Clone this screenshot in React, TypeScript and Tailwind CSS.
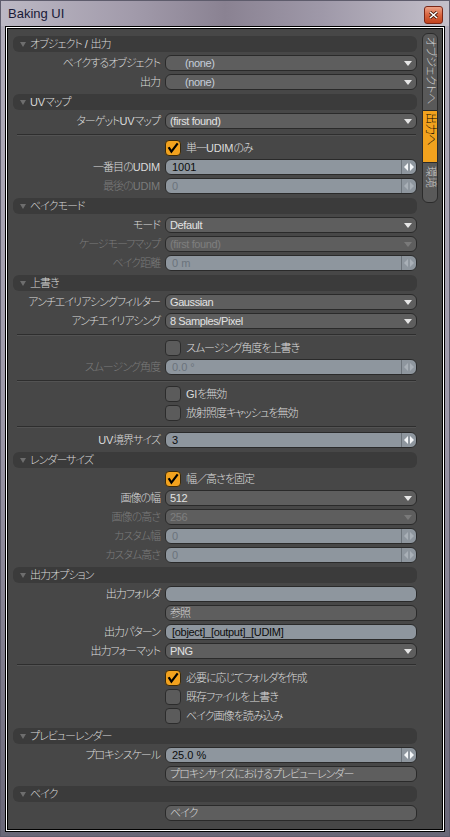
import React from "react";

type Item =
  | { kind: "header"; text: string }
  | { kind: "select"; label: string; value: string; disabled?: boolean; indent?: boolean }
  | { kind: "number"; label: string; value: string; disabled?: boolean }
  | { kind: "field"; label: string; value: string }
  | { kind: "button"; text: string }
  | { kind: "check"; text: string; checked?: boolean }
  | { kind: "sep" };

const items: Item[] = [
  { kind: "header", text: "オブジェクト / 出力" },
  { kind: "select", label: "ベイクするオブジェクト", value: "(none)", indent: true },
  { kind: "select", label: "出力", value: "(none)", indent: true },
  { kind: "header", text: "UVマップ" },
  { kind: "select", label: "ターゲットUVマップ", value: "(first found)" },
  { kind: "sep" },
  { kind: "check", text: "単一UDIMのみ", checked: true },
  { kind: "number", label: "一番目のUDIM", value: "1001" },
  { kind: "number", label: "最後のUDIM", value: "0", disabled: true },
  { kind: "header", text: "ベイクモード" },
  { kind: "select", label: "モード", value: "Default" },
  { kind: "select", label: "ケージモーフマップ", value: "(first found)", disabled: true },
  { kind: "number", label: "ベイク距離", value: "0 m", disabled: true },
  { kind: "header", text: "上書き" },
  { kind: "select", label: "アンチエイリアシングフィルター", value: "Gaussian" },
  { kind: "select", label: "アンチエイリアシング", value: "8 Samples/Pixel" },
  { kind: "sep" },
  { kind: "check", text: "スムージング角度を上書き" },
  { kind: "number", label: "スムージング角度", value: "0.0 °", disabled: true },
  { kind: "sep" },
  { kind: "check", text: "GIを無効" },
  { kind: "check", text: "放射照度キャッシュを無効" },
  { kind: "sep" },
  { kind: "number", label: "UV境界サイズ", value: "3" },
  { kind: "header", text: "レンダーサイズ" },
  { kind: "check", text: "幅／高さを固定", checked: true },
  { kind: "select", label: "画像の幅", value: "512" },
  { kind: "select", label: "画像の高さ", value: "256", disabled: true },
  { kind: "number", label: "カスタム幅", value: "0", disabled: true },
  { kind: "number", label: "カスタム高さ", value: "0", disabled: true },
  { kind: "header", text: "出力オプション" },
  { kind: "field", label: "出力フォルダ", value: "" },
  { kind: "button", text: "参照" },
  { kind: "field", label: "出力パターン", value: "[object]_[output]_[UDIM]" },
  { kind: "select", label: "出力フォーマット", value: "PNG" },
  { kind: "sep" },
  { kind: "check", text: "必要に応じてフォルダを作成", checked: true },
  { kind: "check", text: "既存ファイルを上書き" },
  { kind: "check", text: "ベイク画像を読み込み" },
  { kind: "header", text: "プレビューレンダー" },
  { kind: "number", label: "プロキシスケール", value: "25.0 %" },
  { kind: "button", text: "プロキシサイズにおけるプレビューレンダー" },
  { kind: "header", text: "ベイク" },
  { kind: "button", text: "ベイク" },
];

// japanese runs are set tight, latin runs inside them keep near-normal spacing
function JP({ text }: { text: string }) {
  const parts = text.split(/([A-Za-z0-9 /]+)/).filter((p) => p !== "");
  return (
    <>
      {parts.map((p, i) =>
        /^[A-Za-z0-9 /]+$/.test(p) ? (
          <span key={i} className="whitespace-pre tracking-[-0.2px]">
            {p}
          </span>
        ) : (
          <span key={i} className="font-light tracking-[-1px]">
            {p}
          </span>
        )
      )}
    </>
  );
}

function Arrow({ disabled }: { disabled?: boolean }) {
  return (
    <svg width="8" height="5" viewBox="0 0 8 5" className="ml-auto mr-[4px] shrink-0">
      <path d="M0 0H8L4 5Z" fill={disabled ? "#7a7a7a" : "#e6e6e6"} />
    </svg>
  );
}

function Handle({ disabled }: { disabled?: boolean }) {
  const c = disabled ? "#a9b0b7" : "#f4f6f8";
  return (
    <div className="ml-auto flex h-full w-[15px] shrink-0 items-center justify-center border-l border-[#6b7279]">
      <svg width="10" height="8" viewBox="0 0 10 8">
        <path d="M0 4L4 0V8Z" fill={c} />
        <path d="M10 4L6 0V8Z" fill={c} />
      </svg>
    </div>
  );
}

function Label({ text, disabled }: { text: string; disabled?: boolean }) {
  return (
    <div
      className={`w-[148px] shrink-0 whitespace-nowrap pr-px text-right ${
        disabled ? "text-[#7b7b7b]" : "text-[#dadada]"
      }`}
    >
      <JP text={text} />
    </div>
  );
}

function Check({ checked }: { checked?: boolean }) {
  if (checked) {
    return (
      <div className="flex h-4 w-4 shrink-0 items-center justify-center rounded-[4px] border border-[#3a2a0c] bg-[#f2a21e]">
        <svg width="12" height="12" viewBox="0 0 12 12">
          <path d="M2.2 6.2L4.4 9.6L10 2.2" fill="none" stroke="#000" strokeWidth="2.2" strokeLinecap="square" />
        </svg>
      </div>
    );
  }
  return <div className="h-4 w-4 shrink-0 rounded-[4px] border border-[#2c2c2c] bg-[#5b5b5b]" />;
}

function ItemRow({ item }: { item: Item }) {
  switch (item.kind) {
    case "header":
      return (
        <div className="mt-px flex h-4 items-center rounded-[6px] bg-[#3b3b3b] pl-[7px] text-[#d6d6d6]">
          <svg width="6" height="5" viewBox="0 0 6 5" className="shrink-0">
            <path d="M0 0H6L3 5Z" fill="#6e6e6e" />
          </svg>
          <span className="ml-[4px]">
            <JP text={item.text} />
          </span>
        </div>
      );
    case "sep":
      return <div className="my-[2px] ml-[4px] mr-px h-px bg-[#2e2e2e] shadow-[0_1px_0_#535353]" />;
    case "check":
      return (
        <div className="flex h-4 items-center pl-[152px]">
          <Check checked={item.checked} />
          <span className="ml-[5px] text-[#dcdcdc]">
            <JP text={item.text} />
          </span>
        </div>
      );
    case "select":
      return (
        <div className="flex h-4 items-center">
          <Label text={item.label} disabled={item.disabled} />
          <div className="ml-1 flex h-4 flex-1 items-center rounded-[6px] border border-[#2a2a2a] bg-[#5e5e5e]">
            <span
              className={`tracking-[-0.4px] ${item.indent ? "pl-[19px] text-[#c6cedb]" : "pl-[4px]"} ${
                item.disabled ? "text-[#7e7e7e]" : item.indent ? "" : "text-[#e2e2e2]"
              }`}
            >
              {item.value}
            </span>
            <Arrow disabled={item.disabled} />
          </div>
        </div>
      );
    case "number":
      return (
        <div className="flex h-4 items-center">
          <Label text={item.label} disabled={item.disabled} />
          <div className="ml-1 flex h-4 flex-1 items-center overflow-hidden rounded-[6px] border border-[#2a2a2a] bg-[#8e969e]">
            <span className={`pl-[6px] ${item.disabled ? "text-[#6b737c]" : "text-[#0c0c0c]"}`}>{item.value}</span>
            <Handle disabled={item.disabled} />
          </div>
        </div>
      );
    case "field":
      return (
        <div className="flex h-4 items-center">
          <Label text={item.label} />
          <div className="ml-1 flex h-4 flex-1 items-center rounded-[6px] border border-[#2a2a2a] bg-[#8e969e]">
            <span className="pl-[6px] tracking-[-0.3px] text-[#0c0c0c]">{item.value}</span>
          </div>
        </div>
      );
    case "button":
      return (
        <div className="flex h-4 items-center pl-[152px]">
          <div className="flex h-4 flex-1 items-center rounded-[6px] border border-[#2a2a2a] bg-[#5e5e5e] pl-[4px] text-[#d8d8d8]">
            <JP text={item.text} />
          </div>
        </div>
      );
  }
}

function SideTabs() {
  return (
    <div className="ml-[5px] mt-[4px] flex w-[16px] flex-col text-[11px] font-light tracking-[-0.3px]">
      <div className="flex h-[78px] justify-center rounded-t-[6px] border border-[#2b2b2b] bg-[#595959] pt-[3px] text-[#cdcdcd]">
        <span className="[writing-mode:vertical-rl] [text-orientation:sideways]">オブジェクトへ</span>
      </div>
      <div className="flex h-[51px] justify-center border-x border-[#2b2b2b] bg-[#f2a21e] pt-[2px] text-black">
        <span className="[writing-mode:vertical-rl] [text-orientation:sideways]">出力へ</span>
      </div>
      <div className="flex h-[41px] justify-center rounded-b-[6px] border border-[#2b2b2b] bg-[#595959] pt-[3px] text-[#cdcdcd]">
        <span className="[writing-mode:vertical-rl] [text-orientation:sideways]">環境</span>
      </div>
    </div>
  );
}

export default function App() {
  return (
    <div className="flex h-[837px] w-[450px] flex-col overflow-hidden border border-[#5e5c6c] bg-[linear-gradient(180deg,#b3afbc_0%,#9c98a8_50%,#6a6878_100%)] font-['Liberation_Sans','Noto_Sans_CJK_JP',sans-serif] text-[11px] leading-none [font-feature-settings:'palt']">
      {/* Title bar */}
      <div className="flex h-[25px] shrink-0 items-start justify-between bg-[linear-gradient(90deg,#bcb8c4_0%,#a19aaa_30%,#8a8292_50%,#9f99a9_72%,#c4c0ca_100%)] pl-[7px] pr-[6px]">
        <span className="mt-[6px] text-[13px] text-[#1a1a38]">Baking UI</span>
        <div className="mt-[5px] flex h-[18px] w-[19px] items-center justify-center rounded-[3px] border border-[#7a2616] bg-[linear-gradient(180deg,#eda287_0%,#d8643f_50%,#c2421c_100%)]">
          <svg width="9" height="8" viewBox="0 0 9 8">
            <path d="M1 1L8 7M8 1L1 7" stroke="#3b1206" strokeWidth="3" />
            <path d="M1 1L8 7M8 1L1 7" stroke="#ffffff" strokeWidth="1.6" />
          </svg>
        </div>
      </div>

      {/* Frame */}
      <div className="flex flex-1 flex-col px-[4px] pb-[4px]">
        <div className="flex flex-1 flex-col border border-black">
          <div className="flex flex-1 flex-col border border-white">
            <div className="flex flex-1 border border-black bg-[#474747]">
              <div className="ml-[5px] flex w-[404px] flex-col gap-[3px] pt-[6px]">
                {items.map((it, i) => (
                  <ItemRow key={i} item={it} />
                ))}
              </div>
              <SideTabs />
            </div>
          </div>
        </div>
      </div>
    </div>
  );
}
